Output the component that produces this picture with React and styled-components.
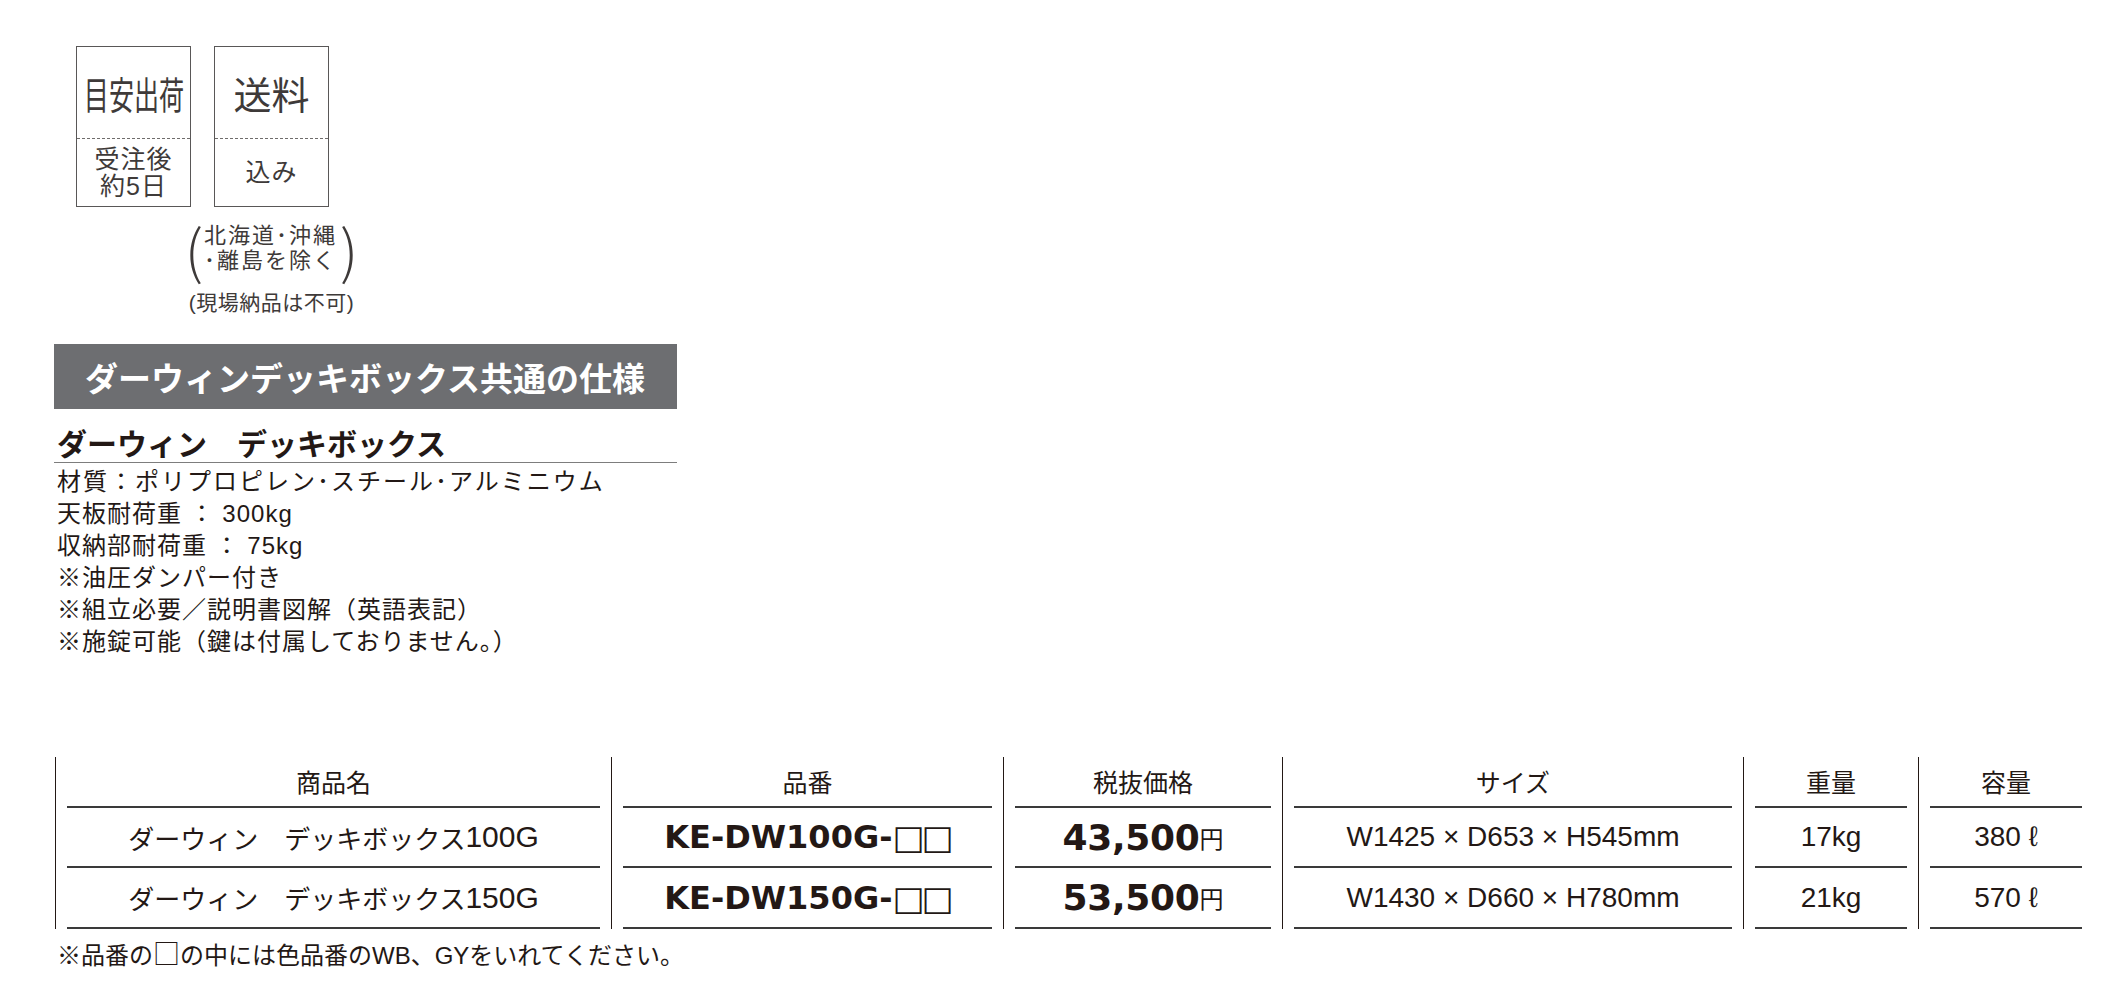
import React from 'react';
import styled, { createGlobalStyle } from 'styled-components';

const GlobalStyle = createGlobalStyle`
  body {
    margin: 0;
    background: #ffffff;
    color: #231815;
    font-family: "Liberation Sans", "Noto Sans CJK JP", sans-serif;
  }
`;

const Page = styled.div`
  width: 2122px;
  height: 1002px;
  box-sizing: border-box;
  padding: 46px 0 0 54px;
`;

const ShipRow = styled.div`
  display: flex;
  align-items: flex-start;
  gap: 23px;
  margin-left: 22px;
`;

const ShipCol = styled.div`
  display: flex;
  flex-direction: column;
  align-items: center;
  width: 115px;
`;

const ShipBox = styled.div`
  width: 115px;
  height: 161px;
  box-sizing: border-box;
  border: 1px solid #595757;
  display: flex;
  flex-direction: column;
  color: #3e3a39;
  font-family: "Noto Sans CJK JP", sans-serif;
`;

const BoxHead = styled.div`
  height: 92px;
  box-sizing: border-box;
  border-bottom: 1px dashed #6f6c6b;
  display: flex;
  align-items: center;
  justify-content: center;
  font-size: 38px;
  line-height: 1;
`;

const HeadText = styled.span`
  display: inline-block;
  white-space: nowrap;
  transform: scaleX(${(p) => p.$squeeze || 1});
`;

const BoxBody = styled.div`
  flex: 1;
  display: flex;
  flex-direction: column;
  align-items: center;
  justify-content: center;
  font-family: "Liberation Sans", "Noto Sans CJK JP", sans-serif;
  font-size: 25px;
  letter-spacing: 1px;
  line-height: 27px;
`;

const Note = styled.div`
  margin-top: 12px;
  display: flex;
  flex-direction: column;
  align-items: center;
  color: #3e3a39;
  white-space: nowrap;
`;

const ParenRow = styled.div`
  display: flex;
  align-items: center;
  height: 58px;
`;

const Paren = styled.span`
  font-family: "Noto Sans CJK JP", sans-serif;
  font-weight: 300;
  font-size: 58px;
  line-height: 58px;
  margin: ${(p) => (p.$right ? '0 0 0 3px' : '0 1px 0 0')};
`;

const ParenLines = styled.div`
  display: flex;
  flex-direction: column;
  align-items: center;
  font-family: "Liberation Sans", "Noto Sans CJK JP", sans-serif;
  font-size: 22px;
  letter-spacing: 2px;
  line-height: 25px;
`;

const NoteSub = styled.div`
  margin-top: 14px;
  font-size: 21px;
  line-height: 24px;
  letter-spacing: 0.5px;
`;

const TitleBar = styled.div`
  margin-top: 29px;
  width: 623px;
  height: 65px;
  box-sizing: border-box;
  padding-left: 31px;
  background: #6d6e71;
  color: #ffffff;
  display: flex;
  align-items: center;
  white-space: nowrap;
  font-family: "Noto Sans CJK JP", sans-serif;
  font-weight: 700;
  font-size: 33px;
`;

const SubTitle = styled.div`
  width: 623px;
  box-sizing: border-box;
  padding: 13px 0 0 3px;
  line-height: 40px;
  border-bottom: 1px solid #7d7d7d;
  font-family: "Noto Sans CJK JP", sans-serif;
  font-weight: 700;
  font-size: 30px;
`;

const SpecList = styled.ul`
  list-style: none;
  margin: 3px 0 0 3px;
  padding: 0;
  font-size: 24px;
  line-height: 32px;
`;

const SpecItem = styled.li`
  letter-spacing: ${(p) => (p.$wide ? '2px' : '1px')};
  white-space: nowrap;
`;

const Table = styled.div`
  margin: 99px 0 0 1px;
  display: grid;
  grid-template-columns: 556px 392px 279px 461px 175px 175px;
`;

const Cell = styled.div`
  border-left: 1px solid #231815;
  padding: 0 11px;
`;

const CellBody = styled.div`
  height: ${(p) => p.$h}px;
  box-sizing: border-box;
  border-bottom: 2px solid #3a3a3a;
  display: flex;
  align-items: center;
  justify-content: center;
  white-space: nowrap;
  padding-bottom: ${(p) => (p.$head ? '2px' : '0')};
`;

const HeadLabel = styled.span`
  font-family: "Noto Sans CJK JP", sans-serif;
  font-size: 25px;
`;

const NameText = styled.span`
  font-family: "Noto Sans CJK JP", sans-serif;
  font-size: 26px;
`;

const Num = styled.span`
  font-family: "Liberation Sans", sans-serif;
  font-size: ${(p) => p.$size || 28}px;
`;

const Code = styled.span`
  font-family: "DejaVu Sans", sans-serif;
  font-weight: 700;
  font-size: 32px;
`;

const Blank = styled.span`
  font-family: "DejaVu Sans", sans-serif;
  font-weight: 400;
  font-size: 34px;
  letter-spacing: -3px;
`;

const Price = styled.span`
  font-family: "DejaVu Sans", sans-serif;
  font-weight: 700;
  font-size: 36px;
  letter-spacing: -0.3px;
`;

const Yen = styled.span`
  font-family: "Noto Sans CJK JP", sans-serif;
  font-size: 24px;
`;

const Footnote = styled.div`
  margin: 9px 0 0 3px;
  font-size: 24px;
  line-height: 30px;
`;

const NoteBox = styled.span`
  font-family: "Noto Sans CJK JP", sans-serif;
  font-size: 27px;
`;

const heads = ['商品名', '品番', '税抜価格', 'サイズ', '重量', '容量'];

const rows = [
  { model: '100G', code: 'KE-DW100G-', price: '43,500', size: 'W1425 × D653 × H545mm', weight: '17kg', vol: '380 ℓ' },
  { model: '150G', code: 'KE-DW150G-', price: '53,500', size: 'W1430 × D660 × H780mm', weight: '21kg', vol: '570 ℓ' },
];

const rowHeights = [60, 61];

const App = () => (
  <Page>
    <GlobalStyle />
    <ShipRow>
      <ShipCol>
        <ShipBox>
          <BoxHead>
            <HeadText $squeeze={0.66}>目安出荷</HeadText>
          </BoxHead>
          <BoxBody>
            <div>受注後</div>
            <div>約5日</div>
          </BoxBody>
        </ShipBox>
      </ShipCol>
      <ShipCol>
        <ShipBox>
          <BoxHead>
            <HeadText>送料</HeadText>
          </BoxHead>
          <BoxBody>
            <div>込み</div>
          </BoxBody>
        </ShipBox>
        <Note>
          <ParenRow>
            <Paren>(</Paren>
            <ParenLines>
              <div>北海道･沖縄</div>
              <div>･離島を除く</div>
            </ParenLines>
            <Paren $right>)</Paren>
          </ParenRow>
          <NoteSub>(現場納品は不可)</NoteSub>
        </Note>
      </ShipCol>
    </ShipRow>

    <TitleBar>ダーウィンデッキボックス共通の仕様</TitleBar>
    <SubTitle>ダーウィン　デッキボックス</SubTitle>
    <SpecList>
      <SpecItem $wide>材質：ポリプロピレン･スチール･アルミニウム</SpecItem>
      <SpecItem>天板耐荷重 ： 300kg</SpecItem>
      <SpecItem>収納部耐荷重 ： 75kg</SpecItem>
      <SpecItem>※油圧ダンパー付き</SpecItem>
      <SpecItem>※組立必要／説明書図解（英語表記）</SpecItem>
      <SpecItem>※施錠可能（鍵は付属しておりません。）</SpecItem>
    </SpecList>

    <Table>
      {heads.map((h) => (
        <Cell key={h}>
          <CellBody $h={51} $head>
            <HeadLabel>{h}</HeadLabel>
          </CellBody>
        </Cell>
      ))}
      {rows.map((r, i) => (
        <React.Fragment key={r.code}>
          <Cell>
            <CellBody $h={rowHeights[i]}>
              <NameText>ダーウィン　デッキボックス</NameText>
              <Num $size={30}>{r.model}</Num>
            </CellBody>
          </Cell>
          <Cell>
            <CellBody $h={rowHeights[i]}>
              <Code>{r.code}</Code>
              <Blank>□□</Blank>
            </CellBody>
          </Cell>
          <Cell>
            <CellBody $h={rowHeights[i]}>
              <Price>{r.price}</Price>
              <Yen>円</Yen>
            </CellBody>
          </Cell>
          <Cell>
            <CellBody $h={rowHeights[i]}>
              <Num>{r.size}</Num>
            </CellBody>
          </Cell>
          <Cell>
            <CellBody $h={rowHeights[i]}>
              <Num>{r.weight}</Num>
            </CellBody>
          </Cell>
          <Cell>
            <CellBody $h={rowHeights[i]}>
              <Num>{r.vol}</Num>
            </CellBody>
          </Cell>
        </React.Fragment>
      ))}
    </Table>
    <Footnote>
      ※品番の<NoteBox>□</NoteBox>の中には色品番のWB、GYをいれてください。
    </Footnote>
  </Page>
);

export default App;
